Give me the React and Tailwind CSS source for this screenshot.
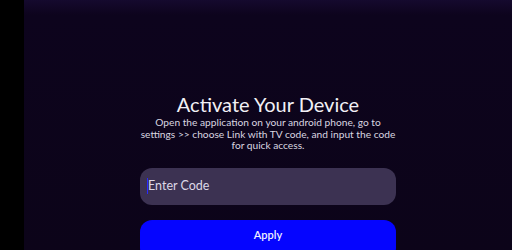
import React from 'react'

const App = () => {
  return (
    <div className="flex h-[250px] w-[512px] overflow-hidden bg-black" style={{ fontFamily: 'Lato, "Noto Sans", sans-serif' }}>
      {/* Left strip */}
      <div className="w-[24px] shrink-0 bg-black" />

      {/* Main panel */}
      <div className="flex flex-1 flex-col items-center bg-gradient-to-b from-[#150a2e] via-[#0d041d] via-[6%] to-[#0c0419] pt-[92px]">
        <h1 className="shrink-0 text-[20px] leading-[24px] text-[#f2f0f5]">Activate Your Device</h1>
        <p className="mt-[1px] shrink-0 whitespace-nowrap text-center text-[10.2px] leading-[11.5px] text-[#d9d6e0]">
          Open the application on your android phone, go to
          <br />
          settings &gt;&gt; choose Link with TV code, and input the code
          <br />
          for quick access.
        </p>

        <div className="mt-[16px] flex h-[37px] w-[256px] shrink-0 items-center rounded-[12px] bg-[#3c3252] px-[7px]">
          <span className="h-[16px] w-[1px] bg-[#2a2aff]" />
          <span className="text-[12.5px] text-[#dcd8e6]">Enter Code</span>
        </div>

        <button className="mt-[15px] flex h-[40px] w-[256px] shrink-0 justify-center rounded-[12px] bg-[#0505ff] pt-[7px] text-[11px] font-semibold text-[#f2f2ff]">
          Apply
        </button>
      </div>
    </div>
  )
}

export default App
